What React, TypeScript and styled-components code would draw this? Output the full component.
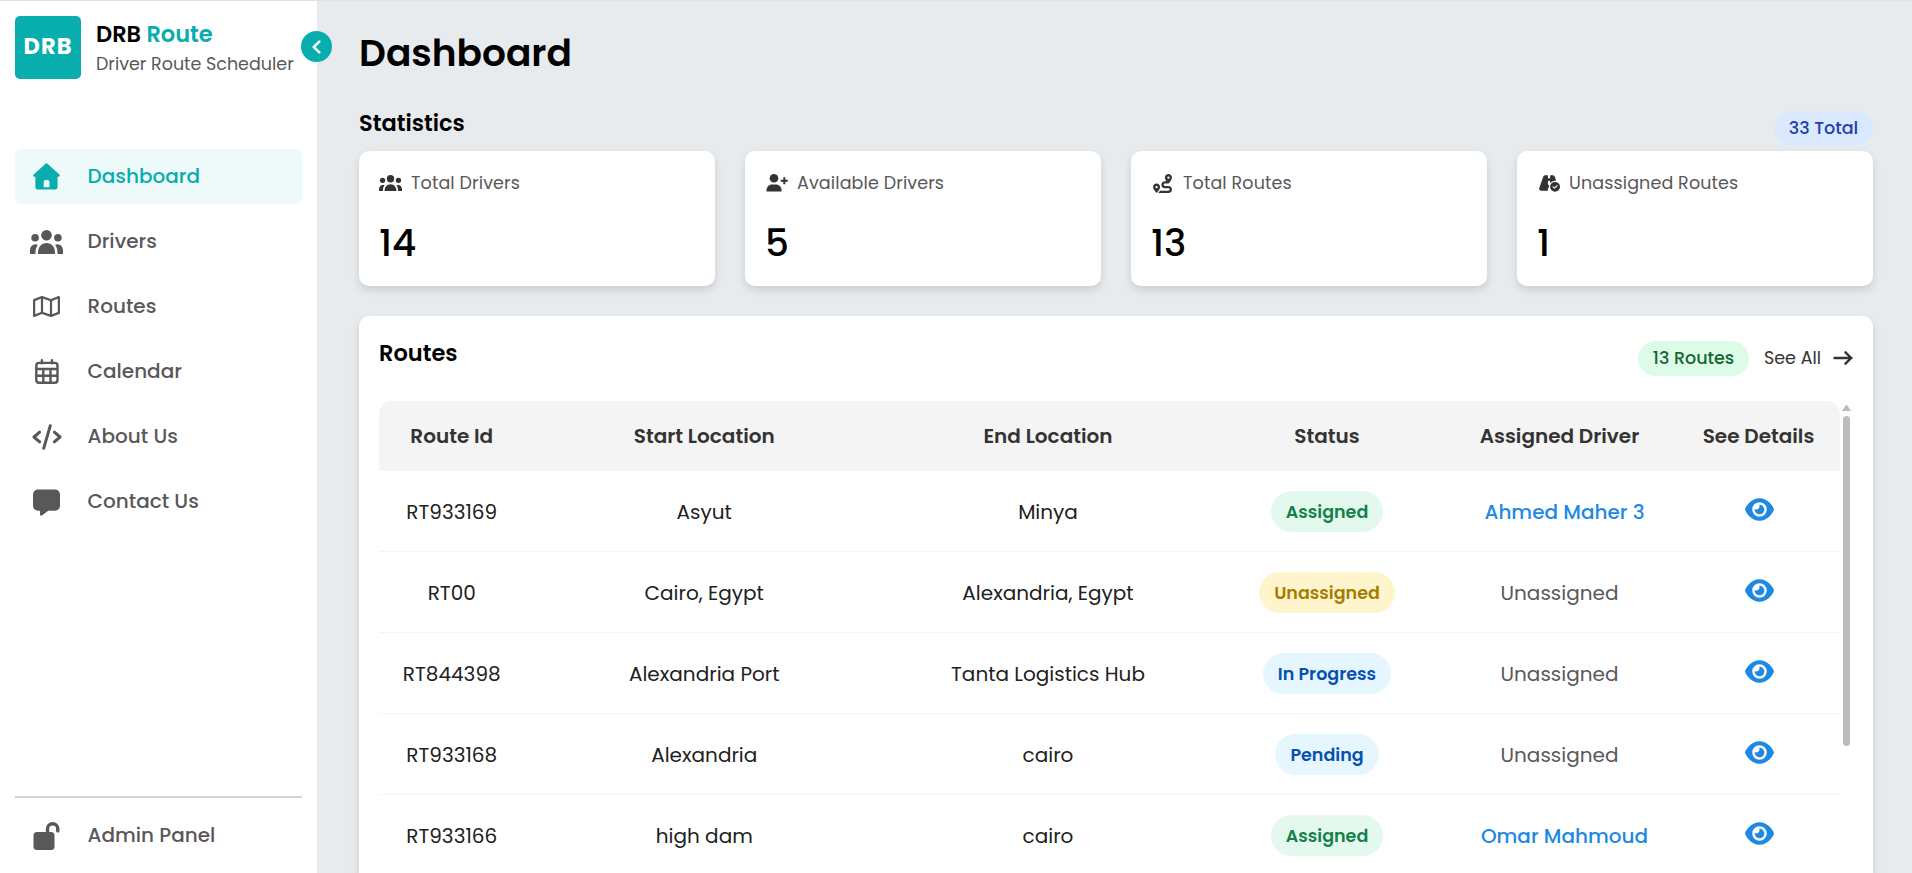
import React from "react";
import styled, { createGlobalStyle, css } from "styled-components";
import { FaEye, FaRegMap, FaRoadCircleCheck, FaRoute } from "react-icons/fa6";

const TEAL = "#08adae";

const GlobalStyle = createGlobalStyle`
  * { box-sizing: border-box; }
  html, body { margin: 0; padding: 0; height: 100%; overflow: hidden; }
  body { font-family: Poppins, Inter, "Open Sans", sans-serif; background: #e7ebee; color: #000; white-space: nowrap; }
  h1, h2, p { margin: 0; }
  svg { display: block; flex: none; }
`;

const Page = styled.div`
  display: flex;
  height: 100vh;
  overflow: hidden;
  border-top: 1px solid #e2e3e8;
`;

/* ---------- Sidebar ---------- */

const Sidebar = styled.aside`
  position: relative;
  display: flex;
  flex-direction: column;
  flex: none;
  width: 317px;
  padding: 15px 15px 10px;
  background: #fff;
`;

const Brand = styled.div`
  display: flex;
  gap: 15px;
  height: 63px;
`;

const Logo = styled.div`
  display: flex;
  align-items: center;
  justify-content: center;
  flex: none;
  width: 66px;
  height: 63px;
  padding-bottom: 4px;
  border-radius: 5px;
  background: ${TEAL};
  color: #fff;
  font-size: 22.5px;
  font-weight: 700;
  letter-spacing: 1.1px;
`;

const BrandText = styled.div`
  display: flex;
  flex-direction: column;
`;

const BrandName = styled.div`
  padding-bottom: 1px;
  font-size: 22.5px;
  font-weight: 600;
  line-height: 36px;
  em { color: ${TEAL}; font-style: normal; }
`;

const BrandTag = styled.div`
  font-size: 17.5px;
  line-height: 23px;
  color: #5a5758;
`;

const Toggle = styled.button`
  position: absolute;
  top: 30px;
  right: -15px;
  display: flex;
  align-items: center;
  justify-content: center;
  width: 31px;
  height: 31px;
  padding: 0;
  border: 0;
  border-radius: 50%;
  background: ${TEAL};
  color: #fff;
`;

const Nav = styled.nav`
  display: flex;
  flex-direction: column;
  gap: 10px;
  margin-top: 70px;
`;

const NavItem = styled.a<{ $active?: boolean }>`
  display: flex;
  align-items: center;
  gap: 24.5px;
  height: 55px;
  padding-left: 15px;
  border-radius: 6px;
  font-size: 20px;
  font-weight: 500;
  color: ${(p) => (p.$active ? TEAL : "#5a5758")};
  background: ${(p) => (p.$active ? "#eef9fa" : "transparent")};
`;

const NavIcon = styled.span`
  display: flex;
  justify-content: center;
  width: 33px;
`;

const NavLabel = styled.span`
  padding-bottom: 2px;
`;

const SidebarFooter = styled.div`
  margin-top: auto;
  padding-top: 10px;
  border-top: 2px solid #d0d5db;
`;

/* ---------- Main column ---------- */

const Main = styled.main`
  display: flex;
  flex-direction: column;
  flex: 1;
  min-width: 0;
  padding: 24px 39px 0 42px;
`;

const Title = styled.h1`
  font-size: 37.5px;
  font-weight: 600;
  line-height: 57px;
`;

const SectionHead = styled.div`
  display: flex;
  justify-content: space-between;
  align-items: flex-start;
`;

const StatsHead = styled(SectionHead)`
  height: 47px;
  margin-top: 22px;
`;

const Heading = styled.h2<{ $line: number }>`
  font-size: 22.5px;
  font-weight: 600;
  line-height: ${(p) => p.$line}px;
`;

const Pill = styled.span<{ $tone: "blue" | "green" }>`
  display: flex;
  align-items: center;
  justify-content: center;
  height: 35px;
  padding-bottom: 2px;
  border-radius: 18px;
  font-size: 17.5px;
  font-weight: 500;
  ${(p) =>
    p.$tone === "blue"
      ? css`background: #dbe9fe; color: #1e40af; width: 99px; margin-top: 7px;`
      : css`background: #dcfce7; color: #166534; width: 111px;`}
`;

const Cards = styled.div`
  display: grid;
  grid-template-columns: repeat(4, 1fr);
  gap: 30px;
`;

const surface = css`
  background: #fff;
  border-radius: 10px;
  box-shadow: 0 4px 8px rgba(0, 0, 0, 0.12);
`;

const Card = styled.section`
  ${surface}
  height: 135px;
  padding: 20px;
`;

const CardLabel = styled.div`
  display: flex;
  align-items: center;
  gap: 9px;
  height: 24px;
  font-size: 17.5px;
  letter-spacing: 0.12px;
  color: #5a5758;
`;

const CardIcon = styled.span`
  display: flex;
  justify-content: center;
  width: 23px;
  color: #333;
`;

const CardValue = styled.p`
  margin-top: 21px;
  font-size: 37.5px;
  font-weight: 500;
  line-height: 55px;
`;

const Panel = styled.section`
  ${surface}
  flex: 1;
  min-height: 0;
  margin-top: 30px;
  padding: 20px 20px 0;
  border-bottom-left-radius: 0;
  border-bottom-right-radius: 0;
  overflow: hidden;
`;

const PanelActions = styled.div`
  display: flex;
  align-items: center;
  gap: 15px;
  margin-top: 5px;
`;

const SeeAll = styled.a`
  display: flex;
  align-items: center;
  justify-content: space-between;
  width: 89px;
  padding-bottom: 2px;
  font-size: 17.5px;
  color: #333;
`;

const TableWrap = styled.div`
  display: flex;
  margin-top: 25px;
`;

const Table = styled.div`
  flex: 1;
`;

const Row = styled.div`
  display: grid;
  grid-template-columns: 145.5px 359.5px 328px 230px 235px 163px;
  align-items: center;
  justify-items: center;
  height: 81.1px;
  border-bottom: 1px solid #f3f4f4;
  font-size: 20px;
  color: #212121;
`;

const HeadRow = styled(Row)`
  height: 70px;
  border: 0;
  border-radius: 13px 13px 0 0;
  background: #f4f4f4;
  font-weight: 600;
  color: #333;
`;

const Cell = styled.span`
  padding-top: 2px;
`;

const tones = {
  green: css`background: #e3f9ee; color: #14804a;`,
  yellow: css`background: #fff5cc; color: #a67c00;`,
  blue: css`background: #e5f6ff; color: #0550ae;`,
};

const Chip = styled.span<{ $tone: keyof typeof tones }>`
  display: flex;
  align-items: center;
  height: 41px;
  margin-top: 1px;
  padding: 0 15px;
  border-radius: 21px;
  font-size: 17.5px;
  font-weight: 600;
  ${(p) => tones[p.$tone]}
`;

const Driver = styled(Cell)<{ $link: boolean }>`
  font-weight: ${(p) => (p.$link ? 500 : 400)};
  color: ${(p) => (p.$link ? "#1e88e5" : "#5a5758")};
  padding-left: ${(p) => (p.$link ? 10 : 0)}px;
`;

const ViewButton = styled.span`
  padding: 0 0 3px 2px;
  color: #1e88e5;
`;

const Scrollbar = styled.div`
  display: flex;
  flex-direction: column;
  align-items: center;
  gap: 5px;
  width: 13px;
  padding-top: 4px;
`;

const Thumb = styled.div`
  width: 7px;
  height: 330px;
  border-radius: 4px;
  background: #bcbcbc;
`;

/* ---------- Icons ---------- */

const HomeIcon = () => (
  <svg width="27" height="27" viewBox="0 0 27 27" fill="currentColor">
    <path
      fillRule="evenodd"
      d="M12.6.8a1.3 1.3 0 0 1 1.8 0L26.4 11.6c.9.8.4 2.2-.8 2.2h-1v9.9a2.8 2.8 0 0 1-2.8 2.8H5.2a2.8 2.8 0 0 1-2.8-2.8v-9.9h-1c-1.2 0-1.7-1.4-.8-2.2zM10.7 24.3h5.8v-5.4a1.9 1.9 0 0 0-1.9-1.9h-2a1.9 1.9 0 0 0-1.9 1.9z"
    />
  </svg>
);

const PeopleIcon = ({ width }: { width: number }) => (
  <svg width={width} height={(width * 24) / 33} viewBox="0 0 33 24" fill="currentColor">
    <circle cx="16.5" cy="5.3" r="5.3" />
    <circle cx="5.1" cy="7.7" r="3.8" />
    <circle cx="27.9" cy="7.7" r="3.8" />
    <path d="M8 24v-1.6c0-5.2 3.4-9.3 8.5-9.3s8.5 4.1 8.5 9.3V24z" />
    <path d="M0 24v-3.4C0 17 2.3 14.2 5.6 14.2c.8 0 1.6.2 2.3.5C6.4 16.9 5.5 19.5 5.5 22.4V24z" />
    <path d="M33 24v-3.4c0-3.6-2.3-6.4-5.6-6.4-.8 0-1.6.2-2.3.5 1.5 2.2 2.4 4.8 2.4 7.7V24z" />
  </svg>
);

const CalendarIcon = () => (
  <svg width="24" height="25" viewBox="0 0 24 25" fill="none" stroke="currentColor" strokeWidth="2.4">
    <rect x="1.3" y="3.9" width="21.2" height="19.8" rx="2.8" />
    <path d="M1.3 10h21M1.3 16.8h21M8.3 10v13.7M15.5 10v13.7" />
    <path d="M6.9 1.2v3M16.9 1.2v3" strokeLinecap="round" />
  </svg>
);

const CodeIcon = () => (
  <svg width="30" height="26" viewBox="0 0 30 26" fill="none" stroke="currentColor" strokeWidth="3" strokeLinecap="round" strokeLinejoin="round">
    <path d="M18.3 1.7 11.7 24.3" />
    <path d="M7.6 8.2 2 13l5.6 4.8M22.4 8.2 28 13l-5.6 4.8" />
  </svg>
);

const MessageIcon = () => (
  <svg width="27" height="29" viewBox="0 -2.5 27 29" fill="currentColor">
    <path d="M5 0h17a5 5 0 0 1 5 5v11.2a5 5 0 0 1-5 5h-6.8L8.9 26c-.8.6-1.9 0-1.9-.9v-3.9H5a5 5 0 0 1-5-5V5a5 5 0 0 1 5-5z" />
  </svg>
);

const LockOpenIcon = () => (
  <svg width="27" height="28" viewBox="-0.5 0 27 28" fill="currentColor">
    <rect x="0" y="10" width="21" height="18" rx="3.5" />
    <path d="M14 11V6.9a5.15 5.15 0 0 1 10.3 0v2" fill="none" stroke="currentColor" strokeWidth="3.4" strokeLinecap="round" />
  </svg>
);

const UserPlusIcon = () => (
  <svg width="22" height="18" viewBox="0 0 22 18" fill="currentColor">
    <circle cx="8" cy="4.3" r="4.3" />
    <path d="M.5 17.6v-1.4c0-3.3 2.5-5.7 5.6-5.7h3.8c3.1 0 5.6 2.4 5.6 5.7v1.4z" />
    <path d="M18.3 3.3v7M14.8 6.8h7" stroke="currentColor" strokeWidth="2" />
  </svg>
);

const ArrowIcon = () => (
  <svg width="20" height="14" viewBox="0 0 20 14" fill="none" stroke="currentColor" strokeWidth="2.4" strokeLinecap="round" strokeLinejoin="round">
    <path d="M1.5 7h17M12.5 1.3 18.2 7l-5.7 5.7" />
  </svg>
);

const ChevronIcon = () => (
  <svg width="10" height="14" viewBox="0 0 10 14" fill="none" stroke="currentColor" strokeWidth="2.6" strokeLinecap="round" strokeLinejoin="round">
    <path d="M7.3 1.6 1.8 7l5.500 5.400" />
  </svg>
);

/* ---------- Data ---------- */

const navItems = [
  { label: "Dashboard", icon: <HomeIcon />, active: true },
  { label: "Drivers", icon: <PeopleIcon width={33} /> },
  { label: "Routes", icon: <FaRegMap size={27} /> },
  { label: "Calendar", icon: <CalendarIcon /> },
  { label: "About Us", icon: <CodeIcon /> },
  { label: "Contact Us", icon: <MessageIcon /> },
];

const stats = [
  { label: "Total Drivers", value: "14", icon: <PeopleIcon width={23} /> },
  { label: "Available Drivers", value: "5", icon: <UserPlusIcon /> },
  { label: "Total Routes", value: "13", icon: <FaRoute size={19} /> },
  { label: "Unassigned Routes", value: "1", icon: <FaRoadCircleCheck size={22} /> },
];

const columns = ["Route Id", "Start Location", "End Location", "Status", "Assigned Driver", "See Details"];

type RouteRow = {
  id: string;
  start: string;
  end: string;
  status: string;
  tone: keyof typeof tones;
  driver?: string;
};

const routes: RouteRow[] = [
  { id: "RT933169", start: "Asyut", end: "Minya", status: "Assigned", tone: "green", driver: "Ahmed Maher 3" },
  { id: "RT00", start: "Cairo, Egypt", end: "Alexandria, Egypt", status: "Unassigned", tone: "yellow" },
  { id: "RT844398", start: "Alexandria Port", end: "Tanta Logistics Hub", status: "In Progress", tone: "blue" },
  { id: "RT933168", start: "Alexandria", end: "cairo", status: "Pending", tone: "blue" },
  { id: "RT933166", start: "high dam", end: "cairo", status: "Assigned", tone: "green", driver: "Omar Mahmoud" },
];

export default function App() {
  return (
    <>
      <GlobalStyle />
      <Page>
        <Sidebar>
          <Brand>
            <Logo>DRB</Logo>
            <BrandText>
              <BrandName>DRB <em>Route</em></BrandName>
              <BrandTag>Driver Route Scheduler</BrandTag>
            </BrandText>
          </Brand>
          <Toggle aria-label="Collapse sidebar"><ChevronIcon /></Toggle>
          <Nav>
            {navItems.map((n) => (
              <NavItem key={n.label} $active={n.active}>
                <NavIcon>{n.icon}</NavIcon>
                <NavLabel>{n.label}</NavLabel>
              </NavItem>
            ))}
          </Nav>
          <SidebarFooter>
            <NavItem>
              <NavIcon><LockOpenIcon /></NavIcon>
              <NavLabel>Admin Panel</NavLabel>
            </NavItem>
          </SidebarFooter>
        </Sidebar>

        <Main>
          <Title>Dashboard</Title>
          <StatsHead>
            <Heading $line={39}>Statistics</Heading>
            <Pill $tone="blue">33 Total</Pill>
          </StatsHead>
          <Cards>
            {stats.map((s) => (
              <Card key={s.label}>
                <CardLabel>
                  <CardIcon>{s.icon}</CardIcon>
                  {s.label}
                </CardLabel>
                <CardValue>{s.value}</CardValue>
              </Card>
            ))}
          </Cards>

          <Panel>
            <SectionHead>
              <Heading $line={34}>Routes</Heading>
              <PanelActions>
                <Pill $tone="green">13 Routes</Pill>
                <SeeAll>See All<ArrowIcon /></SeeAll>
              </PanelActions>
            </SectionHead>
            <TableWrap>
              <Table>
                <HeadRow>
                  {columns.map((label) => (
                    <span key={label}>{label}</span>
                  ))}
                </HeadRow>
                {routes.map((r) => (
                  <Row key={r.id}>
                    <Cell>{r.id}</Cell>
                    <Cell>{r.start}</Cell>
                    <Cell>{r.end}</Cell>
                    <Chip $tone={r.tone}>{r.status}</Chip>
                    <Driver $link={!!r.driver}>{r.driver ?? "Unassigned"}</Driver>
                    <ViewButton><FaEye size={29} /></ViewButton>
                  </Row>
                ))}
              </Table>
              <Scrollbar>
                <svg width="9" height="6" viewBox="0 0 9 6" fill="#bcbcbc"><path d="M3.6.6a1.2 1.2 0 0 1 1.8 0L9 6H0z" /></svg>
                <Thumb />
              </Scrollbar>
            </TableWrap>
          </Panel>
        </Main>
      </Page>
    </>
  );
}
